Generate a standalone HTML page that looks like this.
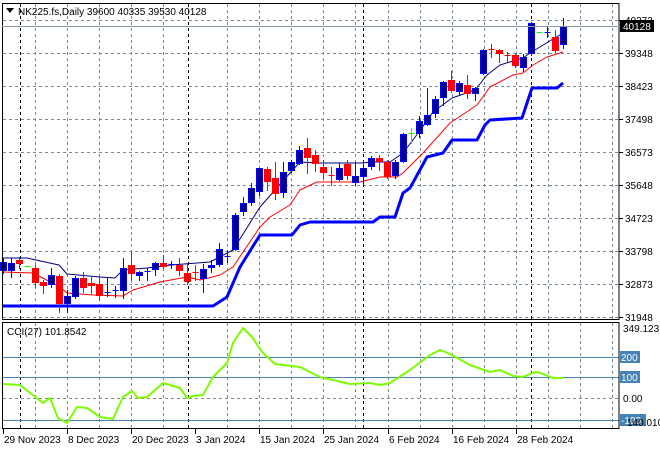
<!DOCTYPE html>
<html><head><meta charset="utf-8"><style>
html,body{margin:0;padding:0;background:#fff;width:660px;height:450px;overflow:hidden}
svg{display:block}
text{font-family:"Liberation Sans",sans-serif;font-size:10px;fill:#000}
</style></head><body>
<svg id="s" width="660" height="450" xmlns="http://www.w3.org/2000/svg">
<g id="grid" stroke="#778899" stroke-width="1" stroke-dasharray="3,3" fill="none"></g>
<g id="lv" stroke="#4682b4" stroke-width="1"></g>
<g id="ind"></g>
<g id="cd"></g>
<rect x="2.5" y="3.5" width="616.5" height="316" fill="none" stroke="#000"/>
<rect x="2.5" y="322.5" width="616.5" height="106" fill="none" stroke="#000"/>
<line x1="2" y1="26.5" x2="619" y2="26.5" stroke="#8a9aa8"/>
<path d="M6 8 L14 8 L10 13 Z" fill="#000"/>
<text x="18" y="15">NK225.fs,Daily  39600 40335 39530 40128</text>
<text x="7" y="335">CCI(27) 101.8542</text>
<g id="ax"></g>
</svg>
<script>
const NS="http://www.w3.org/2000/svg";
function el(p,t,a,txt){const e=document.createElementNS(NS,t);for(const k in a)e.setAttribute(k,a[k]);if(txt!==undefined)e.textContent=txt;document.getElementById(p).appendChild(e);return e;}
const gy=[20,53,86,119,152,185,218,251,284,317];
gy.forEach(y=>el('grid','line',{x1:3,x2:619,y1:y+.5,y2:y+.5}));
el('grid','line',{x1:3,x2:619,y1:398.5,y2:398.5});
const gx=[35,67,99,131,163,227,259,291,323,355,388,420,452,484,516,548,580,612];
gx.forEach(x=>{el('grid','line',{x1:x+.5,x2:x+.5,y1:4,y2:319});el('grid','line',{x1:x+.5,x2:x+.5,y1:323,y2:428});});
[20,188,363,531].forEach(x=>{el('grid','line',{x1:x+.5,x2:x+.5,y1:4,y2:319,stroke:'#000'});el('grid','line',{x1:x+.5,x2:x+.5,y1:323,y2:428,stroke:'#000'});});
[357,377,420].forEach(y=>el('lv','line',{x1:3,x2:619,y1:y+.5,y2:y+.5}));
const pl=["40272","39348","38423","37498","36573","35648","34723","33798","32873","31948"];
gy.forEach((y,i)=>{el('ax','line',{x1:619,x2:623,y1:y+.5,y2:y+.5,stroke:'#000'});el('ax','text',{x:625,y:y+4},pl[i]);});
el('ax','rect',{x:620,y:20,width:34,height:12,fill:'#000'});
el('ax','text',{x:623,y:30,style:'fill:#fff'},"40128");
el('ax','text',{x:623,y:332},"349.1237");
[[357,"200"],[377,"100"],[420,"-100"]].forEach(a=>{el('ax','rect',{x:620,y:a[0]-6,width:a[1].length*6+2,height:12,fill:'#4682b4'});el('ax','text',{x:621,y:a[0]+4,style:'fill:#fff'},a[1]);});
el('ax','text',{x:623,y:402},"0.00");
el('ax','text',{x:627,y:426},"140.010");
const dl=[[3,"29 Nov 2023"],[67,"8 Dec 2023"],[131,"20 Dec 2023"],[195,"3 Jan 2024"],[259,"15 Jan 2024"],[323,"25 Jan 2024"],[388,"6 Feb 2024"],[452,"16 Feb 2024"],[516,"28 Feb 2024"]];
dl.forEach(d=>{el('ax','line',{x1:d[0]+.5,x2:d[0]+.5,y1:429,y2:434,stroke:'#000'});el('ax','text',{x:d[0]+1,y:443},d[1]);});
function pl_(pts,c,w,g){el(g||'ind','polyline',{points:pts.map(p=>p.join(',')).join(' '),fill:'none',stroke:c,'stroke-width':w,'stroke-linejoin':'round'});}
pl_([[3,306],[213,306],[227,297],[240,267],[260,235],[292,235],[300,225],[310,222],[373,222],[380,217],[395,217],[403,193],[410,188],[427,157],[443,153],[452,140],[477,140],[485,125],[490,120],[522,118],[532,88],[557,88],[563,83]],'#0000ff',3);
pl_([[3,272],[33,273],[60,287],[67,293],[93,295],[123,296],[133,290],[160,282],[187,277],[200,280],[220,275],[233,267],[260,227],[270,217],[290,205],[300,190],[317,182],[360,182],[380,177],[397,177],[403,173],[423,153],[450,123],[477,105],[490,87],[513,75],[523,73],[533,65],[547,57],[563,52]],'#ff0000',1);
pl_([[3,258],[27,258],[45,262],[59,265],[67,274],[100,277],[115,278],[123,270],[147,268],[171,265],[210,262],[233,250],[260,207],[290,173],[300,162],[317,163],[360,163],[373,162],[390,162],[403,153],[419,132],[433,112],[452,98],[475,90],[487,75],[500,65],[523,58],[530,53],[563,33]],'#000080',1);
pl_([[3,384],[20,385],[43,403],[50,398],[58,418],[67,423],[77,407],[87,408],[100,417],[113,419],[123,397],[132,391],[138,398],[147,397],[163,383],[180,388],[187,398],[193,396],[203,395],[213,377],[227,363],[233,343],[243,328],[252,337],[262,352],[275,364],[300,367],[320,377],[350,384],[370,383],[380,385],[390,383],[410,370],[430,355],[440,350],[450,354],[470,365],[490,372],[500,370],[513,376],[523,377],[532,373],[538,372],[553,378],[563,378]],'#7cfc00',2);
const C=[[262,270,258,273,'b'],[263,270,258,277,'b'],[260,263,257,268,'r'],[266,266,266,266,'g'],[268,282,265,287,'r'],[282,285,280,293,'r'],[275,284,268,287,'b'],[276,303,274,312,'r'],[296,303,290,312,'b'],[278,296,276,298,'b'],[278,287,272,292,'r'],[283,285,277,293,'r'],[284,295,277,300,'r'],[292,293,277,296,'b'],[290,290,286,297,'b'],[268,290,258,298,'b'],[265,273,252,280,'r'],[272,275,271,280,'b'],[271,271,268,280,'b'],[263,269,262,275,'b'],[263,266,255,268,'r'],[264,264,261,268,'b'],[265,270,258,275,'r'],[273,281,264,284,'r'],[272,272,265,280,'r'],[269,278,264,292,'b'],[265,267,260,272,'b'],[249,264,243,266,'b'],[256,256,250,262,'b'],[215,249,213,250,'b'],[203,211,197,215,'b'],[188,202,183,205,'b'],[168,191,168,195,'b'],[169,181,167,190,'r'],[178,193,162,199,'r'],[172,192,162,197,'b'],[162,170,160,172,'b'],[150,163,146,164,'b'],[148,157,138,173,'r'],[155,163,150,171,'r'],[167,172,160,178,'r'],[175,175,167,185,'r'],[168,179,163,180,'b'],[164,175,160,179,'r'],[176,182,162,185,'b'],[168,176,160,184,'b'],[158,166,156,169,'b'],[158,161,155,170,'r'],[162,176,160,178,'r'],[162,175,160,178,'b'],[134,161,133,162,'b'],[133,133,128,143,'g'],[121,133,116,137,'b'],[115,124,88,125,'b'],[99,113,96,117,'b'],[82,97,81,105,'b'],[80,90,71,92,'r'],[83,91,81,95,'b'],[85,93,75,98,'r'],[88,93,87,100,'b'],[50,73,49,74,'b'],[49,49,44,57,'r'],[50,53,49,62,'r'],[55,55,52,61,'r'],[55,65,54,67,'r'],[57,67,54,71,'b'],[23,53,23,55,'b'],[32,32,32,32,'g'],[32,32,27,37,'b'],[37,50,30,52,'r'],[26,44,18,48,'b']];
C.forEach((c,i)=>{const x=3+8*i;const col=c[4]=='b'?'#00008b':c[4]=='r'?'#ff0000':'#00ff00';const lc=c[4]=='b'?'#0000ff':col;
 if(c[2]<c[3])el('cd','line',{x1:x+.5,x2:x+.5,y1:c[2],y2:c[3]+1,stroke:lc});
 if(c[1]-c[0]<2)el('cd','line',{x1:x-2.5,x2:x+3.5,y1:c[0]+.5,y2:c[0]+.5,stroke:lc});
 else el('cd','rect',{x:x-2.5,y:c[0]+.5,width:6,height:c[1]-c[0],fill:col,stroke:lc});
});
</script>
</body></html>
